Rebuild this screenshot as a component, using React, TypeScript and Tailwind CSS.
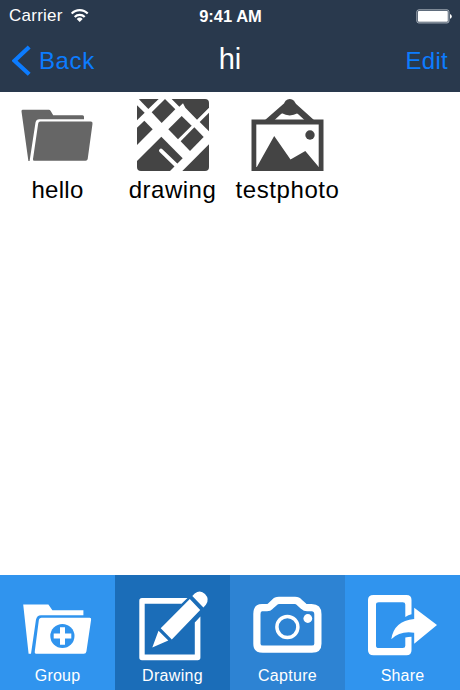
import React from "react";

function StatusBar() {
  return (
    <div className="grid h-[30px] grid-cols-3 items-center pl-[9px] pr-[8px] text-white">
      <div className="flex items-center gap-[8px]">
        <span className="text-[17px] leading-[32px] tracking-[0.25px]">Carrier</span>
        <svg width="18" height="14" viewBox="71 8 18 14" fill="none" stroke="#fff">
          <path d="M71.7 12.6a11 11 0 0 1 16 0" strokeWidth="2.2" />
          <path d="M74.7 15.9a7 7 0 0 1 10 0" strokeWidth="2.2" />
          <path d="M79.7 21l-3-3.1a4.3 4.3 0 0 1 6 0z" fill="#fff" stroke="none" />
        </svg>
      </div>
      <span className="text-center text-[16.5px] font-bold leading-[30px]">9:41 AM</span>
      <svg className="ml-auto" width="36" height="15" viewBox="416 7.5 36 15">
        <rect x="416.9" y="8.4" width="32" height="13" rx="1.8" fill="none" stroke="#b5bdc6" />
        <rect x="418" y="9.5" width="29.8" height="10.8" rx="0.8" fill="#fff" />
        <path d="M450 12.6q1.8.6 1.8 2.3t-1.8 2.3z" fill="#fff" />
      </svg>
    </div>
  );
}

function FolderIcon() {
  return (
    <svg width="80" height="80" viewBox="18 95 80 80" fill="#666">
      <path d="M22.5 109.7h26.3q1.2 0 1.9 1.2l2.5 4.4h29.3q1.5 0 1.5 1.5v2.4H39.3q-3 0-3.8 3.2L29.6 161h-1.2L21.5 111.5q-.2-1.8 1-1.8z" />
      <path d="M40.3 121.6h50.5q2 0 1.7 2.1L87.7 159q-.3 1.8-2.1 1.8H34.5q-1.9 0-1.5-1.9l5.2-35.4q.3-1.9 2.1-1.9z" />
    </svg>
  );
}

function MapIcon() {
  return (
    <svg width="80" height="80" viewBox="3 3 240 240" fill="#444">
      <clipPath id="tile">
        <rect x="15" y="15" width="216" height="216" rx="12" />
      </clipPath>
      <g clipPath="url(#tile)">
        <path d="M20 15H80L49 45z" />
        <path d="M15 34 38 56 15 79z" />
        <path d="M59 55 99 15 130 46 89 87z" />
        <path d="M15 101 37 80 62 106 15 153z" />
        <path d="M119 15H231V41L195 77 160 41 153 28 142 38z" />
        <path d="M203 84 231 56V112z" />
        <path d="M109 106 149 66 179 95 138 136z" />
        <path d="M146 142 187 100 215 129 174 171z" />
        <path d="M15 201 88 128 152 193 114 231H15z" />
        <path d="M231 151V231H151z" />
        <path d="M87 170 141 222" fill="none" stroke="#fff" strokeWidth="12" strokeLinecap="round" />
      </g>
    </svg>
  );
}

function PhotoIcon() {
  return (
    <svg width="80" height="80" viewBox="248 95 80 80" fill="#444">
      <path d="M251.5 119.5H323.5V171H251.5zM256.3 124.6V167H318.7V124.6z" fillRule="evenodd" />
      <path d="M284.5 103 264.5 120.5h9.5l13-12zM295 103l19.5 17.5H305L292 108.5z" />
      <circle cx="289.8" cy="105" r="5.9" />
      <path d="M278 113 284 107h12l6 6-5 .6-3.3 1.2-4 .7-4-.7-3-1.2z" />
      <circle cx="310" cy="135" r="4.7" />
      <path d="M256 168.5 274.2 136 290.5 159.5 305.3 151 320 168.5z" />
    </svg>
  );
}

function FileItem({ label, tracking, children }: { label: string; tracking: string; children: React.ReactNode }) {
  return (
    <div className="flex w-[115px] flex-col items-center">
      {children}
      <span className={"whitespace-nowrap pt-px text-[24px] leading-[28px] text-black " + tracking}>{label}</span>
    </div>
  );
}

function GroupIcon() {
  return (
    <svg width="115" height="90" viewBox="0 575 115 90" fill="#fff">
      <path d="M23.2 604.4h25.2l4 5.8h31v5H41q-4 0-5 4.3L31 653.8h-2.4z" />
      <path d="M41.5 617.8h48.2q1.8 0 1.4 2l-4.7 31.7q-.3 2.3-2.6 2.3H37q-2.7 0-2.2-2.6l4-30.6q.4-2.8 2.7-2.8z" />
      <circle cx="62.4" cy="636" r="12.1" fill="#3094ee" />
      <path d="M60 627.2h5v6.3h6.3v5H65v6.3h-5v-6.3h-6.3v-5H60z" />
    </svg>
  );
}

function DrawingIcon() {
  return (
    <svg width="115" height="90" viewBox="115 575 115 90" fill="#fff">
      <path d="M142 598h45.5l-6 5.7h-36.8v50.8h50.1V622.5l5.6-6V657.5q0 2.7-2.7 2.7H142q-2.7 0-2.7-2.7v-56.8q0-2.7 2.7-2.7z" />
      <path d="m192.3 596 2.4-2.6q5.6-4.2 10.3.6 4.9 5.2.9 10.8l-2.5 2.6zM189.8 598.9l10.4 11.1-28.4 29.5-11.1-11.2zM158.5 630.7l9.8 9.9-16 7z" />
    </svg>
  );
}

function CameraIcon() {
  return (
    <svg width="115" height="90" viewBox="230 575 115 90">
      <path d="M262 607.7h5q1.9 0 3.3-1.5l4.4-4q1.4-1.8 4.2-1.8h16.2q2.6 0 4 1.8l4.5 4q1.5 1.5 3.5 1.5h4.5q6.3 0 6.3 6.5v29.5q0 5.5-6 5.5h-49q-6 0-6-5.5V614q0-6.3 5.1-6.3z" fill="none" stroke="#fff" strokeWidth="7.2" />
      <circle cx="287.4" cy="627" r="10.5" fill="none" stroke="#fff" strokeWidth="3.5" />
      <circle cx="307.8" cy="618.5" r="4.4" fill="#fff" />
    </svg>
  );
}

function ShareIcon() {
  return (
    <svg width="115" height="90" viewBox="345 575 115 90" fill="#fff">
      <path d="M373.5 595h33q5 0 5 5v14.3q-3.2.5-6.2 2.7v-12.5q0-2.3-2.5-2.3h-24q-2.8 0-2.8 2.3v41.3q0 2.3 2.8 2.3h24q2.5 0 2.5-2.3v-8.3q3-.7 6.2-.7v13.4q0 5-5 5h-33q-5.5 0-5.5-5V600q0-5 5.5-5z" />
      <path d="m414.2 607.7 22.8 17.3-22.8 18.7v-10.9q-13.9-2.3-22.9 6.4 2.5-18.3 22.9-20.3z" />
    </svg>
  );
}

function Tab({ label, color, tracking, children }: { label: string; color: string; tracking: string; children: React.ReactNode }) {
  return (
    <button className={"flex h-[115px] w-[115px] flex-col items-center text-white " + color}>
      {children}
      <span className={"text-[16px] leading-[22px] " + tracking}>{label}</span>
    </button>
  );
}

export default function App() {
  return (
    <div className="flex h-[690px] w-[460px] flex-col overflow-hidden bg-white font-['Liberation_Sans',Arial,sans-serif]">
      <header className="h-[92px] shrink-0 bg-[#29394d]">
        <StatusBar />
        <nav className="grid h-[62px] grid-cols-3 px-[12px] text-[#0c7cff]">
          <button className="flex items-start gap-[7px] pt-[15px]">
            <svg width="20" height="32" viewBox="12 45 20 32" fill="none">
              <path d="M29.2 47 14.5 60.8 29.2 74.2" stroke="#0c7cff" strokeWidth="4.2" />
            </svg>
            <span className="text-[24px] leading-[32px] tracking-[0.6px]">Back</span>
          </button>
          <h1 className="pt-[12px] text-center text-[29px] leading-[34px] text-white">hi</h1>
          <button className="flex justify-end pt-[15px] text-[24px] leading-[32px] tracking-[0.3px]">Edit</button>
        </nav>
      </header>
      <main className="flex flex-1 pt-[3px]">
        <FileItem label="hello" tracking="tracking-[0.3px]"><FolderIcon /></FileItem>
        <FileItem label="drawing" tracking="tracking-[0.5px]"><MapIcon /></FileItem>
        <FileItem label="testphoto" tracking="tracking-[0.6px]"><PhotoIcon /></FileItem>
      </main>
      <footer className="flex shrink-0">
        <Tab label="Group" color="bg-[#3094ee]" tracking="tracking-[0.2px]"><GroupIcon /></Tab>
        <Tab label="Drawing" color="bg-[#1b6db8]" tracking="tracking-[0.3px]"><DrawingIcon /></Tab>
        <Tab label="Capture" color="bg-[#2d83d3]" tracking="tracking-[0.3px]"><CameraIcon /></Tab>
        <Tab label="Share" color="bg-[#3094ee]" tracking="tracking-[0.2px]"><ShareIcon /></Tab>
      </footer>
    </div>
  );
}
